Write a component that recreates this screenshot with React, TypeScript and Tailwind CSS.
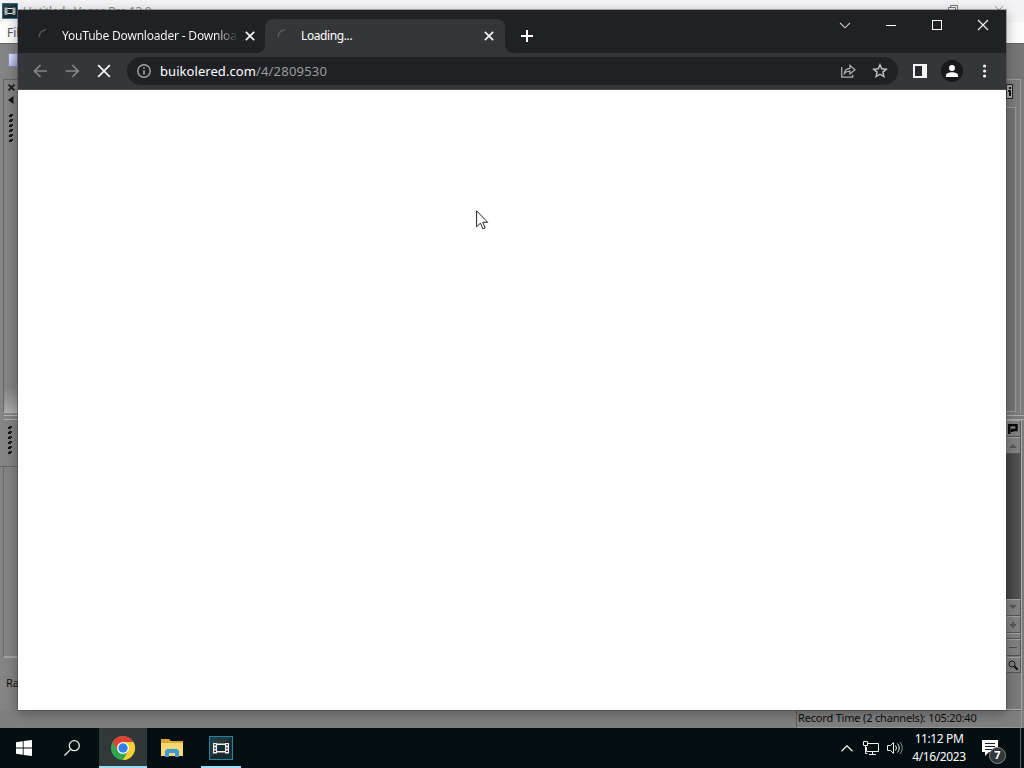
import React from "react";

const ui = "font-['Noto_Sans','Open_Sans',sans-serif]";

function Grip() {
  return (
    <svg width="6" height="30" viewBox="0 0 6 30" shapeRendering="crispEdges">
      {[0, 5, 10, 15, 20, 25].map((y) => (
        <g key={y}>
          <rect x="1" y={y + 1} width="3" height="2" fill="#161616" />
          <rect x="2" y={y} width="3" height="2" fill="#222" />
          <rect x="4" y={y + 2} width="1" height="1" fill="#a5a5a5" />
        </g>
      ))}
    </svg>
  );
}

function FilmIcon({ size }: { size: number }) {
  return (
    <svg width={size} height={size} viewBox="0 0 24 24">
      <rect x=".5" y=".5" width="23" height="23" fill="#182a30" stroke="#2382a5" />
      <path d="M1 23V1h22L12 9z" fill="#243a3e" />
      <rect x="4" y="7" width="4" height="10.5" fill="#eee" />
      <rect x="16" y="7" width="4" height="10.5" fill="#eee" />
      <path d="M8 8.2h8M8 15.8h8" stroke="#eee" strokeWidth="1.6" />
      <path d="M5 8.2h2v1.4H5zM5 11.4h2v1.4H5zM5 14.6h2V16H5zM17 8.2h2v1.4h-2zM17 11.4h2v1.4h-2zM17 14.6h2V16h-2z" fill="#252b2e" />
    </svg>
  );
}

function Spinner({ dim }: { dim?: boolean }) {
  return (
    <svg width="16" height="16" viewBox="0 0 16 16" fill="none">
      <path d="M2.3 9C2 5 5 2 9 1.7" stroke={dim ? "#5b5e62" : "#53565a"} strokeWidth="1.6" />
    </svg>
  );
}

function Cross({ size, width, color = "#f2f3f4" }: { size: number; width: number; color?: string }) {
  return (
    <svg width={size} height={size} viewBox="0 0 12 12" stroke={color} strokeWidth={width} fill="none">
      <path d="M1 1l10 10M11 1L1 11" />
    </svg>
  );
}

function LeftStrip() {
  return (
    <div className="flex w-[18px] flex-col overflow-hidden bg-linear-to-r from-[#858585] to-[#808080]">
      <div className="h-[35px] shrink-0 pl-2 pt-[9px]">
        <div className="h-[14px] w-[10px] border border-[#8289b4] bg-linear-to-br from-[#e5e9fa] to-[#9ba1d0]" />
      </div>
      <div className="ml-[3px] flex h-[334px] shrink-0 flex-col border-b border-l border-t border-[#666] border-b-[#b2b2b2]">
        <div className="flex h-[34px] flex-col items-center pt-[4px]">
          <Cross size={7} width={3} color="#191919" />
          <svg className="mt-[5px]" width="6" height="8" viewBox="0 0 6 8"><path d="M5.5 0v8L0 4z" fill="#161616" /></svg>
        </div>
        <div className="pl-[4px]"><Grip /></div>
        <div className="mt-auto h-6 bg-linear-to-b from-transparent to-[#aaa]" />
      </div>
      <div className="ml-1 mt-[2px] h-[5px] shrink-0 border-y border-[#b0b0b0]" />
      <div className="flex h-[47px] shrink-0 flex-col border-b border-[#666] pl-[7px] pt-[6px]"><Grip /></div>
      <div className="ml-[3px] h-[191px] shrink-0 border-b-2 border-l border-[#a2a2a2] border-l-[#686868]" />
      <div className={`${ui} mt-[17px] pl-[6px] text-[11px] leading-4 tracking-[-0.2px] text-[#111]`}>Ra</div>
    </div>
  );
}

function ScrollCell({ children, className }: { children?: React.ReactNode; className: string }) {
  return <div className={`flex shrink-0 items-center justify-center border border-[#555] border-l-[#999] border-t-[#a0a0a0] bg-[#808080] pr-[2px] ${className}`}>{children}</div>;
}

function RightStrip() {
  return (
    <div className="flex w-[18px] flex-col bg-[#7b7b7b]">
      <div className="h-[35px] bg-[#767676]" />
      <div className="mr-[3px] h-[28px] border-r border-t border-[#999] pt-[4px]">
        <div className="flex h-[15px] w-[7px] items-center justify-center border border-[#202020] bg-[#aaa]">
          <svg width="3" height="9" viewBox="0 0 3 9"><path d="M1 0h2v2H1zM0 3h3v6H1V5H0z" fill="#111" /></svg>
        </div>
      </div>
      <div className="mr-[3px] h-[306px] border-r border-[#999]">
        <div className="mr-1 h-[305px] border-y border-r border-[#999] bg-[#737373]" />
      </div>
      <div className="mt-[2px] h-[5px] border-y border-[#aaa]" />
      <div className="mr-[2px] flex h-[284px] flex-col border-r border-[#aaa]">
        <ScrollCell className="h-[17px] w-[15px]">
          <svg width="10" height="10" viewBox="0 0 10 10"><path d="M1.2 10V1h7.3v5H4v2" fill="none" stroke="#080808" strokeWidth="2.4" /></svg>
        </ScrollCell>
        <ScrollCell className="h-[17px] w-[15px]">
          <svg width="8" height="5" viewBox="0 0 8 5"><path d="M0 5l4-4 4 4z" fill="#555" /></svg>
        </ScrollCell>
        <div className="h-[145px] shrink-0 bg-linear-to-r from-[#424242] to-[#575757]" />
        <ScrollCell className="h-[17px] w-[15px]">
          <svg width="8" height="5" viewBox="0 0 8 5"><path d="M0 0h8L4 4z" fill="#555" /></svg>
        </ScrollCell>
        <ScrollCell className="h-[17px] w-[15px]">
          <svg width="8" height="8" viewBox="0 0 8 8"><path d="M4 1v6M1 4h6" stroke="#555" strokeWidth="2" /></svg>
        </ScrollCell>
        <ScrollCell className="h-[6px] w-[15px]" />
        <ScrollCell className="h-[17px] w-[15px]">
          <div className="h-px w-2 bg-[#4c4c4c]" />
        </ScrollCell>
        <ScrollCell className="mt-[1px] h-[16px] w-[15px]">
          <svg width="10" height="10" viewBox="0 0 10 10" fill="none" stroke="#151515"><circle cx="4" cy="4" r="3" /><path d="M6 6l4 4" strokeWidth="2" /></svg>
        </ScrollCell>
      </div>
      <div className="mr-[2px] grow border-b border-r border-[#aaa]" />
    </div>
  );
}

function EditorWindow() {
  return (
    <div className="flex h-[728px] flex-col bg-[#7f7f7f]">
      <div className="flex h-[22px] shrink-0 items-start overflow-hidden bg-[#f3f3f5]">
        <div className="pl-[2px] pt-[3px]"><FilmIcon size={16} /></div>
        <div className={`${ui} pl-[5px] pt-[4px] text-[12px] leading-4 tracking-[-0.4px] text-[#888]`}>Untitled - Vegas Pro 13.0</div>
        <div className="ml-auto flex gap-[36px] pr-[20px] pt-[5px]">
          <svg width="10" height="10" viewBox="0 0 10 10" fill="none" stroke="#777"><path d="M.5 2.5h7v7h-7zM2.5 2V.5h7v7H8" /></svg>
          <Cross size={10} width={1} color="#888" />
        </div>
      </div>
      <div className={`${ui} h-[21px] shrink-0 overflow-hidden bg-[#fbfbfc] pl-[7px] pt-[2px] text-[12px] leading-[18px] text-[#555]`}>File</div>
      <div className="flex h-[667px] shrink-0 justify-between border-t border-[#646464]">
        <LeftStrip />
        <RightStrip />
      </div>
      <div className="flex grow items-stretch pl-[796px]">
        <div className={`${ui} mr-[2px] flex grow items-center border border-[#969696] border-l-[#5b5b5b] border-t-[#686868] pb-[2px] pl-[1px] text-[11px] leading-[14px] tracking-[-0.18px] text-[#0c0c0c]`}>Record Time (2 channels): 105:20:40</div>
      </div>
    </div>
  );
}

function TabStrip() {
  return (
    <div className="flex h-[43px] shrink-0 bg-[#202125]">
      <div className="mt-[9px] flex h-[33px] w-[247px] items-center pl-[19px]">
        <Spinner />
        <div className="ml-[9px] w-[175px] whitespace-nowrap bg-linear-to-r from-white from-88% to-[#303136] bg-clip-text text-[12px] leading-5 tracking-[-0.2px] text-transparent">YouTube Downloader - Downloa</div>
        <span className="ml-[8px]"><Cross size={10} width={2.1} /></span>
      </div>
      <div className="relative mt-[9px] flex h-[34px] w-[240px] items-center rounded-t-[8px] bg-[#35363a] pb-px pl-[11px] text-white">
        <svg className="absolute -left-2 bottom-0" width="8" height="8" viewBox="0 0 8 8"><path d="M8 0v8H0a8 8 0 0 0 8-8z" fill="#35363a" /></svg>
        <svg className="absolute -right-2 bottom-0" width="8" height="8" viewBox="0 0 8 8"><path d="M0 0v8h8a8 8 0 0 1-8-8z" fill="#35363a" /></svg>
        <Spinner dim />
        <span className="ml-[9px] w-[183px] text-[12px] leading-5 tracking-[-0.4px]">Loading...</span>
        <Cross size={10} width={2} />
      </div>
      <div className="mt-[9px] flex h-[33px] items-center pl-[16px]">
        <svg width="12" height="12" viewBox="0 0 12 12" stroke="#fff" strokeWidth="2"><path d="M6 0v12M0 6h12" /></svg>
      </div>
      <div className="ml-auto flex h-[30px] items-center text-[#f5f5f5]">
        <div className="flex w-[46px] justify-center">
          <svg width="12" height="7" viewBox="0 0 12 7" fill="none" stroke="#d5d5d5" strokeWidth="1.1"><path d="M1 .8l5 5 5-5" /></svg>
        </div>
        <div className="flex w-[46px] justify-center"><div className="h-px w-[10px] bg-white" /></div>
        <div className="flex w-[46px] justify-center"><div className="h-[10px] w-[10px] border border-white" /></div>
        <div className="flex w-[46px] justify-center"><Cross size={12} width={1.2} /></div>
      </div>
    </div>
  );
}

function Toolbar() {
  return (
    <div className="flex h-[37px] shrink-0 items-center border-b border-[#4b4c50] bg-[#35363a]">
      <div className="flex w-[109px] items-center gap-[17px] pl-[15px]">
        <svg width="15" height="14" viewBox="0 0 15 14" fill="none" stroke="#85878b" strokeWidth="1.7"><path d="M14 7H1.5M7.5 1l-6 6 6 6" /></svg>
        <svg width="15" height="14" viewBox="0 0 15 14" fill="none" stroke="#85878b" strokeWidth="1.7"><path d="M.5 7h13M7.2 1l6 6-6 6" /></svg>
        <Cross size={14} width={1.5} />
      </div>
      <div className="flex h-[28px] w-[771px] items-center rounded-full bg-[#202125] pl-[10px] pr-[10px]">
        <svg width="14" height="14" viewBox="0 0 14 14" fill="none" stroke="#a2a5a9" strokeWidth="1.4"><circle cx="7" cy="7" r="6.2" /><path d="M7 6.2v4.4M7 3.3v1.5" strokeWidth="1.6" /></svg>
        <div className="ml-[9px] whitespace-nowrap text-[13px] leading-5 tracking-[0.2px] text-[#989b9f]"><span className="tracking-[0.06px] text-white">buikolered.com</span>/4/2809530</div>
        <div className="ml-auto flex items-center gap-[16px]">
          <svg width="16" height="16" viewBox="0 0 16 16" fill="none" stroke="#aaacb0" strokeWidth="1.3"><path d="M1.7 4v10.2h11v-2.4M4.3 10.5c.5-3.5 2.2-5 5.6-5.2V2.5L15 6.7l-5.1 4.2V8.2c-2.5-.1-4 .5-5.6 2.3z" /></svg>
          <svg width="16" height="16" viewBox="0 0 16 16" fill="none" stroke="#c4c6c8" strokeWidth="1.4"><path d="M8 1.7l1.8 4.1 4.5.4-3.4 2.9 1 4.4L8 11.2l-3.9 2.3 1-4.4-3.4-2.9 4.5-.4z" /></svg>
        </div>
      </div>
      <div className="flex items-center pl-[15px]">
        <div className="h-[14px] w-[14px] bg-[#f5f5f5] p-[2px]"><div className="h-[10px] w-[7px] bg-[#292a2e]" /></div>
        <div className="ml-[14px] flex h-[22px] w-[22px] items-center justify-center rounded-full bg-[#18191d]">
          <svg width="12" height="12" viewBox="0 0 12 12" fill="#fff"><circle cx="6" cy="3" r="3" /><path d="M0 12v-1.8C0 8.2 3 7.2 6 7.2s6 1 6 3V12z" /></svg>
        </div>
        <svg className="ml-[20px]" width="4" height="14" viewBox="0 0 4 14" fill="#f5f5f5"><circle cx="1.6" cy="2" r="1.6" /><circle cx="1.6" cy="7" r="1.6" /><circle cx="1.6" cy="12" r="1.6" /></svg>
      </div>
    </div>
  );
}

function Taskbar() {
  return (
    <div className="flex h-10 bg-[#030e10]">
      <div className="flex w-[48px] items-center justify-center">
        <svg width="16" height="16" viewBox="0 0 16 16" fill="#fff"><path d="M0 2.2L6.8 1.2v6.4H0zM7.6 1.1L16 0v7.6H7.6zM0 8.4h6.8v6.4L0 13.8zM7.6 8.4H16V16l-8.4-1.1z" /></svg>
      </div>
      <div className="flex w-[51px] items-center pl-4">
        <svg width="16" height="16" viewBox="0 0 16 16" fill="none" stroke="#eee" strokeWidth="1.3"><circle cx="10.3" cy="5.7" r="5" /><path d="M6.6 9.4L.5 15.5" /></svg>
      </div>
      <div className="flex w-[48px] items-center justify-center border-b-2 border-[#9bdcf8] bg-[#30383a] pt-[2px]">
        <svg width="24" height="24" viewBox="0 0 24 24">
          <circle cx="12" cy="12" r="12" fill="#31a650" />
          <path d="M12 12L1.6 6A12 12 0 0 1 22.4 6H12z" fill="#df4336" />
          <path d="M12 6h10.4A12 12 0 0 1 12 24l5.2-9z" fill="#fbcf34" />
          <path d="M1.6 6l5.2 9L12 12z" fill="#df4336" />
          <circle cx="12" cy="12" r="6" fill="#fff" /><circle cx="12" cy="12" r="4.7" fill="#347fe5" />
        </svg>
      </div>
      <div className="flex w-[54px] items-center pl-[14px]">
        <svg width="22" height="19" viewBox="0 0 22 19">
          <path d="M0 0h8l2 2h12v15H0z" fill="#dba832" /><path d="M0 4h22v13H0z" fill="#f8d775" />
          <path d="M4 18v-6l2-2h10l2 2v6h-4v-4H8v4z" fill="#3b9ad5" />
        </svg>
      </div>
      <div className="flex w-[40px] items-center justify-center border-b-2 border-[#9bdcf8] pt-[2px]"><FilmIcon size={24} /></div>
      <div className="ml-auto flex items-center pr-[3px] text-white">
        <svg width="12" height="7" viewBox="0 0 12 7" fill="none" stroke="#f2f2f2" strokeWidth="1.3"><path d="M.5 6.3L6 .8l5.5 5.5" /></svg>
        <svg className="ml-[9px]" width="18" height="14" viewBox="0 0 18 14" fill="none" stroke="#eee"><path d="M6 2.5h10.5v8H4.5V6M1.5.5h4v4h-4zM3.5 4.5v8h2M7 13.5h7M10.5 10.5v3" /></svg>
        <svg className="ml-[7px]" width="17" height="14" viewBox="0 0 17 14" fill="none" stroke="#eee"><path d="M.5 4.5h3l3-3v11l-3-3h-3zM8.5 4.5q2 2.5 0 5M10.5 2.5q3.6 4.5 0 9" /><path d="M13 1q4.6 6 0 12" stroke="#849092" /></svg>
        <div className="ml-[2px] w-[66px] whitespace-nowrap text-center text-[12px] leading-[18px] tracking-[-0.4px]">
          <div>11:12 PM</div><div>4/16/2023</div>
        </div>
        <div className="relative ml-[10px] mr-[10px] h-[24px] w-[28px]">
          <svg className="mt-[3px]" width="17" height="18" viewBox="0 0 17 18"><path d="M0 1h16v12H7l-4 4v-4H0z" fill="#fff" /><path d="M3 4.5h10M3 7.5h10M3 10.5h7" stroke="#132023" /></svg>
          <div className="absolute left-[7px] top-[11px] flex h-[17px] w-[17px] items-center justify-center rounded-full border border-[#888] bg-[#303639] text-[11px] font-bold">7</div>
        </div>
        <div className="h-10 w-px bg-[#596366]" />
      </div>
    </div>
  );
}

export default function App() {
  return (
    <main className={`${ui} relative h-[768px] w-[1024px] overflow-hidden`}>
      <EditorWindow />
      <Taskbar />
      <section className="absolute left-[18px] top-[10px] flex h-[700px] w-[988px] flex-col bg-white shadow-[0_0_0_1px_#4446,0_3px_12px_#0005]">
        <TabStrip />
        <Toolbar />
      </section>
      <svg className="absolute left-[476px] top-[210px]" width="13" height="20" viewBox="0 0 13 20"><path d="M.6.8v16l3.8-3.6 2.5 5.6 2.3-1-2.5-5.5h5z" fill="#fff" stroke="#222" strokeWidth="1" /></svg>
    </main>
  );
}
